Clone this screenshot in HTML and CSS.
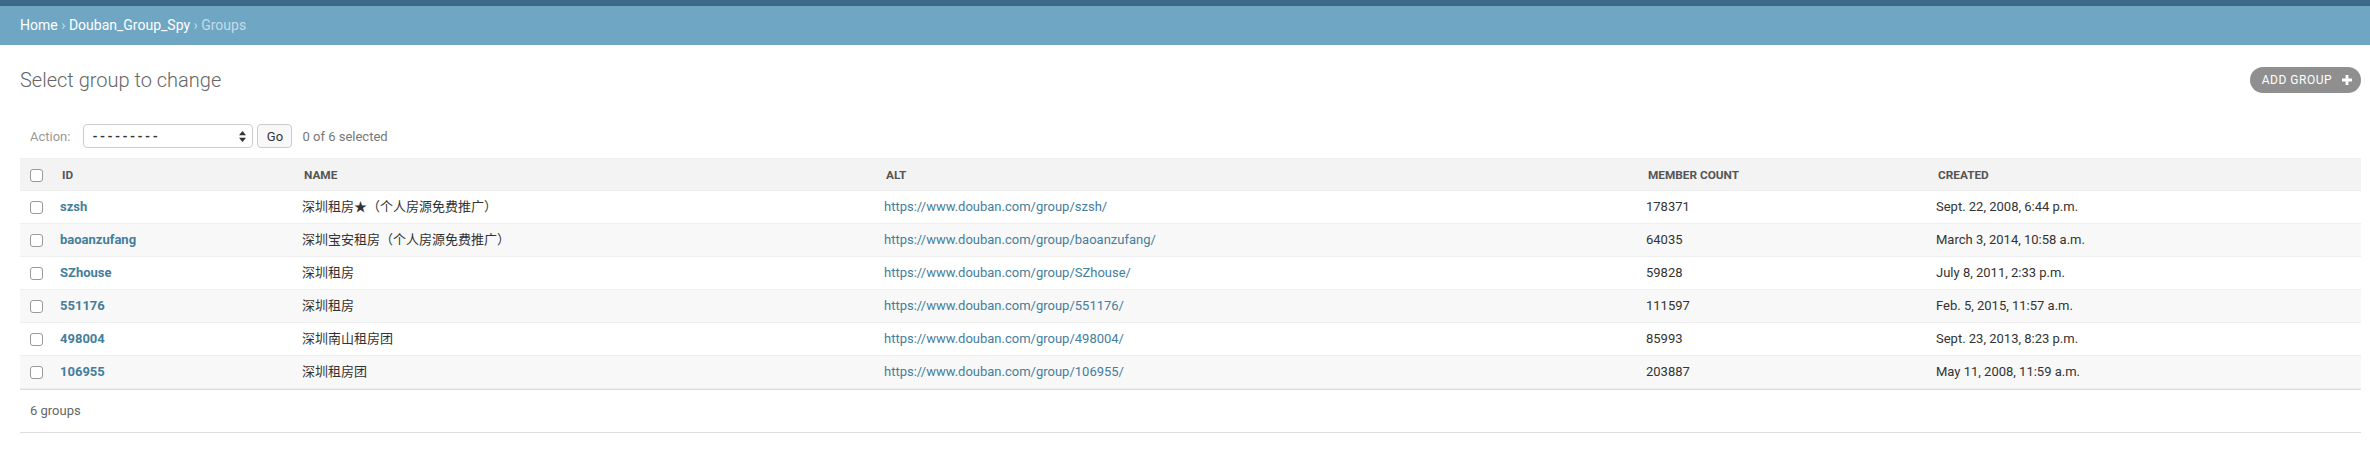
FILE: index.html
```html
<!DOCTYPE html>
<html lang="en">
<head>
<meta charset="utf-8">
<title>Select group to change</title>
<link rel="stylesheet" href="styles.css">
</head>
<body>
<div class="header"></div>
<div class="breadcrumbs">
  <a href="#">Home</a> <span class="sep">›</span> <a href="#">Douban_Group_Spy</a> <span class="sep">›</span> Groups
</div>
<div class="content">
  <div class="title-row">
    <h1>Select group to change</h1>
    <a class="addlink" href="#">ADD GROUP
      <svg class="plus" width="10" height="10" viewBox="0 0 10 10"><path d="M3.6 0h2.8v3.6H10v2.8H6.4V10H3.6V6.4H0V3.6h3.6z" fill="#fff"/></svg>
    </a>
  </div>
  <div class="actions">
    <label class="action-label">Action:</label>
    <span class="select">
      <span class="select-text">---------</span>
      <svg class="select-arrows" width="7" height="11" viewBox="0 0 7 11"><path d="M3.5 0L7 4.3H0z M3.5 11L0 6.7H7z" fill="#333"/></svg>
    </span>
    <button class="go" type="button">Go</button>
    <span class="counter">0 of 6 selected</span>
  </div>
  <table class="result-list">
    <colgroup>
      <col class="c-cb"><col class="c-id"><col class="c-name"><col class="c-alt"><col class="c-mc"><col class="c-created">
    </colgroup>
    <thead>
      <tr>
        <th class="cb"><input type="checkbox" class="check"></th>
        <th>ID</th>
        <th>NAME</th>
        <th>ALT</th>
        <th>MEMBER COUNT</th>
        <th>CREATED</th>
      </tr>
    </thead>
    <tbody>
      <tr>
        <td class="cb"><input type="checkbox" class="check"></td>
        <td class="id"><a href="#">szsh</a></td>
        <td>深圳租房★（个人房源免费推广）</td>
        <td><a href="#">https://www.douban.com/group/szsh/</a></td>
        <td>178371</td>
        <td>Sept. 22, 2008, 6:44 p.m.</td>
      </tr>
      <tr class="alt-row">
        <td class="cb"><input type="checkbox" class="check"></td>
        <td class="id"><a href="#">baoanzufang</a></td>
        <td>深圳宝安租房（个人房源免费推广）</td>
        <td><a href="#">https://www.douban.com/group/baoanzufang/</a></td>
        <td>64035</td>
        <td>March 3, 2014, 10:58 a.m.</td>
      </tr>
      <tr>
        <td class="cb"><input type="checkbox" class="check"></td>
        <td class="id"><a href="#">SZhouse</a></td>
        <td>深圳租房</td>
        <td><a href="#">https://www.douban.com/group/SZhouse/</a></td>
        <td>59828</td>
        <td>July 8, 2011, 2:33 p.m.</td>
      </tr>
      <tr class="alt-row">
        <td class="cb"><input type="checkbox" class="check"></td>
        <td class="id"><a href="#">551176</a></td>
        <td>深圳租房</td>
        <td><a href="#">https://www.douban.com/group/551176/</a></td>
        <td>111597</td>
        <td>Feb. 5, 2015, 11:57 a.m.</td>
      </tr>
      <tr>
        <td class="cb"><input type="checkbox" class="check"></td>
        <td class="id"><a href="#">498004</a></td>
        <td>深圳南山租房团</td>
        <td><a href="#">https://www.douban.com/group/498004/</a></td>
        <td>85993</td>
        <td>Sept. 23, 2013, 8:23 p.m.</td>
      </tr>
      <tr class="alt-row">
        <td class="cb"><input type="checkbox" class="check"></td>
        <td class="id"><a href="#">106955</a></td>
        <td>深圳租房团</td>
        <td><a href="#">https://www.douban.com/group/106955/</a></td>
        <td>203887</td>
        <td>May 11, 2008, 11:59 a.m.</td>
      </tr>
    </tbody>
  </table>
  <p class="paginator">6 groups</p>
</div>
</body>
</html>
```
FILE: styles.css
```css
* { box-sizing: border-box; }
html, body { margin: 0; padding: 0; background: #fff; }
body {
  font-family: Roboto, "Noto Sans CJK SC", sans-serif;
  font-size: 14px;
  color: #333;
}
a { text-decoration: none; color: #447e9b; }

.header { height: 6px; background: #3d6a85; }

.breadcrumbs {
  background: #6fa6c4;
  padding: 10px 20px;
  line-height: 19px;
  font-size: 14px;
  color: #c4dce8;
}
.breadcrumbs a { color: #fff; }
.breadcrumbs .sep { color: #c4dce8; }

.content { padding: 22px 9px 0 20px; }

.title-row {
  display: flex;
  align-items: center;
  justify-content: space-between;
}
h1 {
  margin: 0;
  font-size: 20px;
  line-height: 24px;
  font-weight: 300;
  color: #666;
}
.addlink {
  display: flex;
  align-items: center;
  height: 26px;
  padding: 0 9px 0 12px;
  border-radius: 13px;
  background: #8f8f8f;
  color: #fff;
  font-size: 12px;
  letter-spacing: 0.5px;
}
.addlink .plus { margin-left: 10px; }

.actions {
  margin-top: 21px;
  padding: 10px;
  display: flex;
  align-items: center;
  height: 44px;
  font-size: 13px;
}
.action-label { color: #999; }
.select {
  position: relative;
  display: flex;
  align-items: center;
  margin-left: 13px;
  width: 170px;
  height: 24px;
  border: 1px solid #ccc;
  border-radius: 4px;
  padding-left: 8px;
  background: #fff;
  color: #333;
  font-size: 13px;
  font-weight: 700;
}
.select-text { letter-spacing: 2.4px; }
.select-arrows { position: absolute; right: 6px; top: 6px; }
.go {
  margin-left: 4px;
  width: 35px;
  height: 24px;
  border: 1px solid #ccc;
  border-radius: 4px;
  background: #f8f8f8;
  font-family: Roboto, sans-serif;
  font-size: 13px;
  color: #333;
  padding: 0;
}
.counter { margin-left: 10px; color: #777; }

.result-list {
  width: 100%;
  border-collapse: collapse;
  table-layout: fixed;
  font-size: 13px;
  border-bottom: 1px solid #e4e4e4;
}
.c-cb { width: 30px; }
.c-id { width: 242px; }
.c-name { width: 582px; }
.c-alt { width: 762px; }
.c-mc { width: 290px; }
.c-created { width: 435px; }

.result-list th, .result-list td {
  text-align: left;
  padding: 8px 10px;
  line-height: 16px;
  border-bottom: 1px solid #eee;
  vertical-align: middle;
  white-space: nowrap;
}
.result-list thead th {
  background: #f3f3f3;
  border-top: 1px solid #eee;
  color: #555;
  font-size: 11.8px;
  font-weight: 700;
  padding: 8px 10px 7px 12px;
}
.result-list .cb { padding-left: 10px; padding-right: 0; }
.result-list thead th.cb { padding-left: 10px; }
.result-list td.id a { font-weight: 700; }
.alt-row td { background: #f8f8f8; }

.check {
  -webkit-appearance: none;
  appearance: none;
  display: block;
  margin: 0;
  width: 13px;
  height: 13px;
  border: 1px solid #999;
  border-radius: 3px;
  background: #fff;
}

.paginator {
  margin: 0;
  padding: 10px 10px;
  line-height: 22px;
  font-size: 13px;
  color: #666;
  border-top: 1px solid #ddd;
  border-bottom: 1px solid #ddd;
}
```
